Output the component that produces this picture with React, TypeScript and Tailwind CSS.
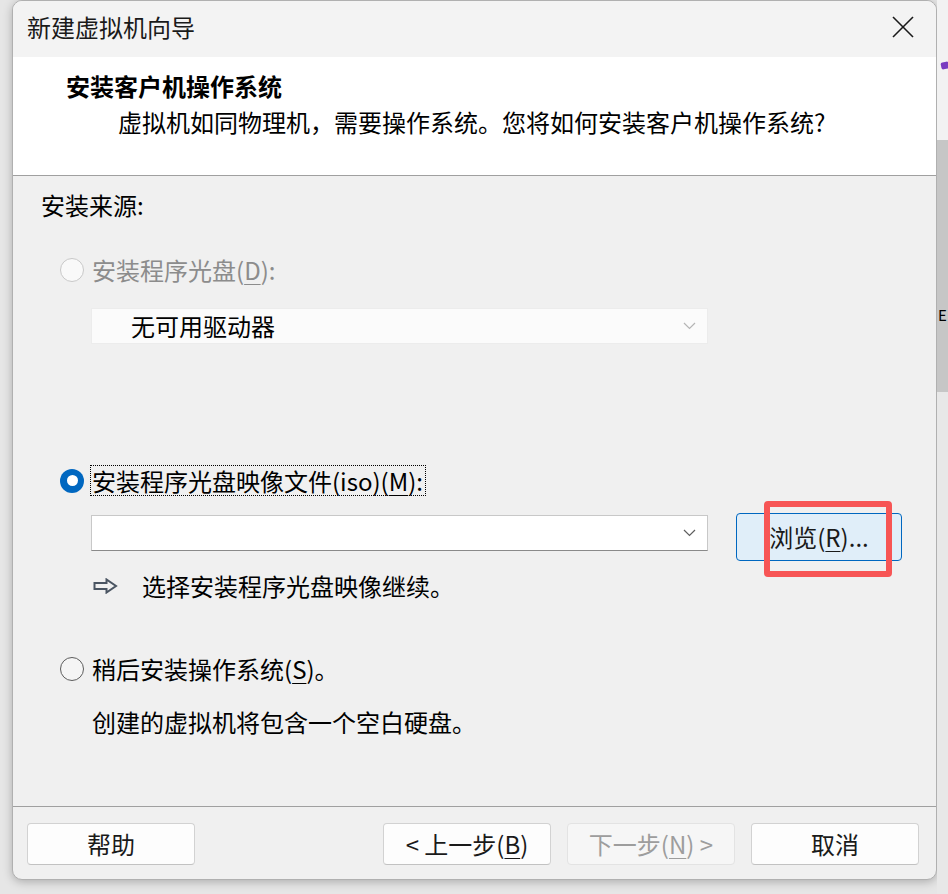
import React from "react";

const font = { fontFamily: '"Noto Sans CJK SC", "Noto Sans", sans-serif' };

function Radio({ state }: { state: "disabled" | "checked" | "off" }) {
  if (state === "checked") {
    return (
      <span className="w-[24px] h-[24px] rounded-full bg-[#0067c0] flex items-center justify-center shrink-0">
        <span className="w-[11px] h-[11px] rounded-full bg-white" />
      </span>
    );
  }
  return (
    <span
      className={`w-[24px] h-[24px] rounded-full shrink-0 border-[1.5px] ${
        state === "disabled" ? "border-[#c8c8c8] bg-[#f9f9f9]" : "border-[#5c5c5c] bg-[#f5f5f5]"
      }`}
    />
  );
}

function Chevron({ color }: { color: string }) {
  return (
    <svg width="13" height="8" viewBox="0 0 13 8" className="shrink-0">
      <polyline points="1,1 6.5,6.5 12,1" fill="none" stroke={color} strokeWidth="1.2" />
    </svg>
  );
}

function U({ children }: { children: React.ReactNode }) {
  return <span className="underline underline-offset-[4px] decoration-1">{children}</span>;
}

function FooterButton({ children, disabled }: { children: React.ReactNode; disabled?: boolean }) {
  return (
    <button
      className={`w-[168px] h-[42px] rounded-[4px] border flex items-center justify-center text-[24px] leading-none ${
        disabled
          ? "bg-[#f6f6f6] border-[#e3e3e3] text-[#9d9d9d]"
          : "bg-[#fdfdfd] border-[#d2d2d2] border-b-[#c2c2c2] text-[#1a1a1a]"
      }`}
    >
      {children}
    </button>
  );
}

export default function App() {
  return (
    <div className="flex w-[948px] h-[894px] bg-[#e6e6e6] overflow-hidden" style={font}>
      <div className="ml-[12px] w-[925px] h-[880px] flex flex-col rounded-[10px] border border-[#b0b0b0] bg-[#f0f0f0] overflow-hidden shadow-[0_2px_10px_rgba(0,0,0,0.25)]">
        {/* title bar */}
        <div className="h-[56px] shrink-0 bg-[#f3f3f3] flex items-center justify-between pl-[14px] pr-[22px] pb-[4px]">
          <span className="text-[24px] leading-[32px] text-[#1a1a1a]">新建虚拟机向导</span>
          <svg width="22" height="22" viewBox="0 0 22 22">
            <line x1="1" y1="1" x2="21" y2="21" stroke="#1a1a1a" strokeWidth="1.6" />
            <line x1="21" y1="1" x2="1" y2="21" stroke="#1a1a1a" strokeWidth="1.6" />
          </svg>
        </div>

        {/* header */}
        <div className="h-[119px] shrink-0 bg-white border-b border-[#a0a0a0] pt-[13px]">
          <div className="pl-[53px] text-[24px] leading-[32px] font-bold text-black">安装客户机操作系统</div>
          <div className="pl-[105px] mt-[4px] text-[24px] leading-[32px] text-black">
            虚拟机如同物理机，需要操作系统。您将如何安装客户机操作系统?
          </div>
        </div>

        {/* content */}
        <div className="h-[630px] shrink-0 flex flex-col pl-[28px] pt-[13px] text-[24px] leading-[32px] text-black">
          <div>安装来源:</div>

          <div className="mt-[32px] ml-[19px] flex items-center gap-[6px]">
            <Radio state="disabled" />
            <span className="border border-transparent pl-[1px] pr-[2px] text-[#8c8c8c]">
              安装程序光盘(<U>D</U>):
            </span>
          </div>

          <div className="mt-[21px] ml-[50px] w-[617px] h-[36px] bg-[#fbfbfb] border border-[#ececec] flex items-center justify-between pl-[39px] pr-[11px]">
            <span>无可用驱动器</span>
            <Chevron color="#b5b5b5" />
          </div>

          <div className="mt-[121px] ml-[19px] flex items-center gap-[6px]">
            <Radio state="checked" />
            <span className="border border-dotted border-black pl-[1px] pr-[2px] leading-[29px]">
              安装程序光盘映像文件(iso)(<U>M</U>):
            </span>
          </div>

          <div className="mt-[17px] ml-[50px] flex items-start gap-[28px]">
            <div className="mt-[2px] w-[617px] h-[36px] bg-white border border-[#c8c8c8] border-b-[#8a8a8a] flex items-center justify-end pr-[11px]">
              <Chevron color="#5f5f5f" />
            </div>
            <div className="relative">
              <button className="w-[166px] h-[48px] rounded-[4px] bg-[#e0eef9] border border-[#0067c0] flex items-center justify-center text-[24px] leading-none text-[#1a1a1a]">
                浏览(<U>R</U>)...
              </button>
              <div className="absolute left-[28px] top-[-12px] w-[128px] h-[76px] border-[6px] border-[#f75555] rounded-[4px] pointer-events-none" />
            </div>
          </div>

          <div className="mt-[9px] ml-[52px] flex items-center gap-[24px]">
            <svg width="25" height="16" viewBox="0 0 25 16" className="shrink-0">
              <path d="M1.5 5 H13.5 V1.5 L23 8 L13.5 14.5 V11 H1.5 Z" fill="none" stroke="#4a5562" strokeWidth="2" strokeLinejoin="miter" />
            </svg>
            <span>选择安装程序光盘映像继续。</span>
          </div>

          <div className="mt-[50px] ml-[19px] flex items-center gap-[6px]">
            <Radio state="off" />
            <span className="border border-transparent pl-[1px] pr-[2px]">
              稍后安装操作系统(<U>S</U>)。
            </span>
          </div>

          <div className="mt-[20px] ml-[51px]">创建的虚拟机将包含一个空白硬盘。</div>
        </div>

        {/* footer */}
        <div className="flex-1 border-t border-[#a0a0a0] pt-[16px] pl-[14px] pr-[17px] flex items-start">
          <FooterButton>帮助</FooterButton>
          <div className="ml-auto flex gap-[16px]">
            <FooterButton>
              &lt; 上一步(<U>B</U>)
            </FooterButton>
            <FooterButton disabled>
              下一步(<U>N</U>) &gt;
            </FooterButton>
            <FooterButton>取消</FooterButton>
          </div>
        </div>
      </div>

      {/* background strip to the right of the window */}
      <div className="w-[11px] flex flex-col">
        <div className="h-[140px] bg-[#f2f2f2] pt-[62px]">
          <div className="ml-[4px] w-[8px] h-[7px] bg-[#7a3cc0] rounded-[2px] -rotate-12" />
        </div>
        <div className="h-[252px] bg-[#c6c6c6] pt-[164px]">
          <span className="block text-[15px] leading-[22px] text-black ml-[1px]">E</span>
        </div>
        <div className="flex-1 bg-[#e8e8e8]" />
      </div>
    </div>
  );
}
